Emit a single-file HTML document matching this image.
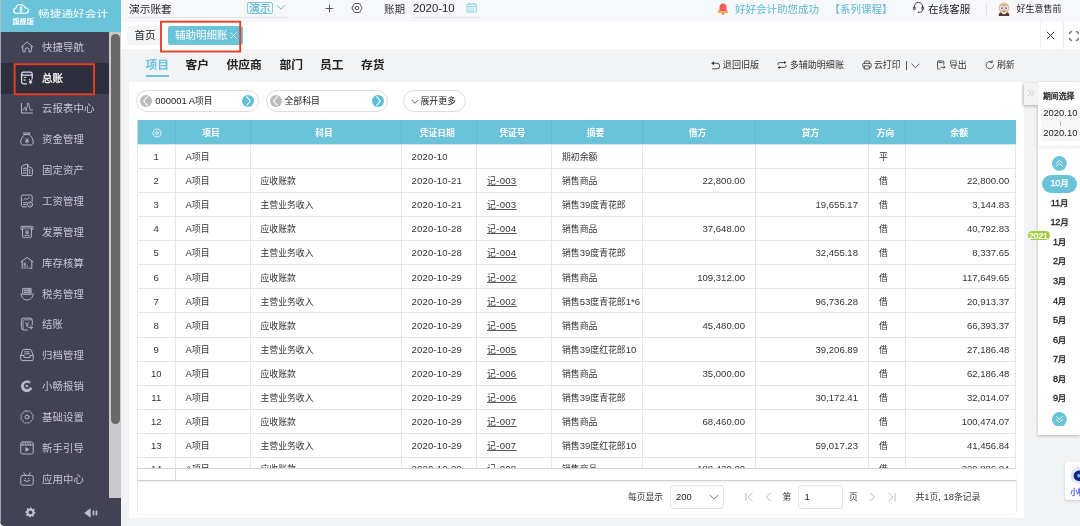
<!DOCTYPE html>
<html lang="zh-CN">
<head>
<meta charset="utf-8">
<title>辅助明细账</title>
<style>
html,body{margin:0;padding:0}
body{width:1080px;height:526px;overflow:hidden;position:relative;background:#f2f3f5;font-family:"Liberation Sans","Noto Sans CJK SC",sans-serif;color:#333;font-size:8.75px;line-height:1}
*{box-sizing:border-box}
#app{position:absolute;left:0;top:0;width:1080px;height:526px;overflow:hidden;will-change:transform;background:#f2f3f5}
.abs{position:absolute}
.l{font-size:1.08em;line-height:0}
.la{position:relative;top:-0.8px}
td .la{top:0}
.t{position:absolute;white-space:nowrap;line-height:12px;height:12px;margin-top:-6px}
#side{position:absolute;left:0;top:0;width:121px;height:526px;background:#434155;overflow:hidden;border-bottom-left-radius:5px}
#logo{position:absolute;left:0;top:0;width:121px;height:32px;background:#6ac3d9}
.nav{position:absolute;left:0;width:109px;height:31px;color:#c6c7d1;font-size:10.4px}
.nav.sel{background:#2e2e3d;color:#f0f0f3;font-weight:normal;-webkit-text-stroke:0.35px #f0f0f3}
.nav span{position:absolute;left:42px;top:50%;line-height:14px;margin-top:-6.8px;white-space:nowrap;letter-spacing:0.1px}
.nav svg{position:absolute;left:18.55px;top:50%;margin-top:-8.8px;width:16px;height:16px;overflow:visible;color:#b9bbca}
.nav.sel svg{color:#dcdde4}
#track{position:absolute;left:109px;top:32px;width:12px;height:466px;background:#c9c9ce}
#thumb{position:absolute;left:111.3px;top:34px;width:8.6px;height:390.3px;background:#696969;border-radius:4.3px}
#sfoot{position:absolute;left:0;top:498px;width:121px;height:28px;background:#434155}
#top{position:absolute;left:121px;top:0;width:959px;height:22px;background:#f7f8fc}
#tabs{position:absolute;left:121px;top:22px;width:959px;height:27px;background:#fff}
.red{position:absolute;border:2px solid #e63f24}
#panel{position:absolute;left:129px;top:82px;width:895px;height:436px;background:#fff}
.pill{position:absolute;top:89.5px;height:22.5px;border:1px solid #dedede;border-radius:11.5px;background:#fff}
.circ{position:absolute;width:12px;height:12px;border-radius:6px;top:4px}
table{border-collapse:collapse;table-layout:fixed;position:absolute;left:137px;top:120.25px;width:878px}
th{background:#6ac3d9;color:#fff;font-weight:bold;height:24px;padding:3px 3px 0 0;text-align:center;font-size:8.75px;border-left:1px solid #61b9d0;border-bottom:1px solid #cdeaf2}
th:first-child{border-left:1px solid #dcdcdc;padding:2px 0 0 1px}
td{height:24.1px;padding:2.4px 10px 0 10px;border:1px solid #e6e6e6;font-size:8.85px;color:#333;white-space:nowrap;overflow:hidden}
td.u{letter-spacing:0.3px}
td.n{letter-spacing:0.17px}
tr.last td{padding-top:0.6px}
td.c{text-align:center;padding:2.4px 0 0 0}
td.r{text-align:right}
td.u span{text-decoration:underline;text-decoration-thickness:0.7px;text-underline-offset:1.2px;text-decoration-color:#555}
#tblwrap{position:absolute;left:0;top:0;width:1080px;height:468px;overflow:hidden}
.mon{position:absolute;left:1038px;width:42px;text-align:center;font-weight:normal;-webkit-text-stroke:0.3px currentColor;font-size:8.5px;letter-spacing:-0.2px;line-height:12px;height:12px;margin-top:-6px;color:#333;padding-left:1px}
</style>
</head>
<body>
<div id="app">
<div id="side">
<div id="logo">
<svg class="abs" style="left:12px;top:3px" width="18" height="12" viewBox="0 0 18 12"><path d="M4.6 10.3 C2.7 10.3 1.6 9.2 1.6 7.7 C1.6 6.4 2.5 5.4 3.8 5.2 C4.1 3 5.9 1.5 8.4 1.5 C10.6 1.5 12.3 2.8 12.9 4.7 C14.8 4.7 16.4 5.8 16.4 7.6 C16.4 9.2 15.1 10.3 13.4 10.3 Z" fill="none" stroke="#fff" stroke-width="1.1"/><path d="M9 1.8 V10 M7.6 5 H10.4 M7.6 6.6 H10.4 M7.9 8.2 L9 9.3 L10.1 8.2" fill="none" stroke="#fff" stroke-width="0.9"/></svg>
<div class="t" style="left:12.5px;top:22.3px;font-size:7.1px;color:#fff;font-weight:bold;letter-spacing:0px">旗舰版</div>
<div class="t" style="left:37.5px;top:13.6px;font-size:8.6px;color:#fff;transform:scaleX(1.36);transform-origin:0 50%;letter-spacing:0px">畅捷通好会计</div>
</div>
<div class="nav" style="top:32.00px"><svg viewBox="-8 -8 16 16"><path d="M-5.7 0 L0.1 -5.1 L5.9 0 M-4.2 -0.9 V3.9 Q-4.2 5 -3.2 5 H-1.9 V2.4 Q-1.9 0.9 0.1 0.9 Q2.1 0.9 2.1 2.4 V5 H3.4 Q4.4 5 4.4 3.9 V-0.9" fill="none" stroke="currentColor" stroke-width="0.95" stroke-linecap="round" stroke-linejoin="round"/></svg><span>快捷导航</span></div>
<div class="nav sel" style="top:62.86px"><svg viewBox="-8 -8 16 16"><path d="M-0.5 5.9 H-3.6 Q-5.4 5.9 -5.4 4.1 V-4 Q-5.4 -5.8 -3.6 -5.8 H3.4 Q5.2 -5.8 5.2 -4 V0.3 M-5.4 -2.8 H5.2" fill="none" stroke="currentColor" stroke-width="1.3" stroke-linecap="round"/><path d="M-3.2 -0.6 H-0.6" fill="none" stroke="currentColor" stroke-width="0.9"/><rect x="-3.3" y="1.1" width="1.9" height="1.9" fill="currentColor" opacity="0.7"/><path d="M2.08 1.12 L3.60 3.02 L5.12 1.12 M3.60 3.02 V5.87 M2.08 3.59 H5.12 M2.08 4.73 H5.12" fill="none" stroke="currentColor" stroke-width="1"/></svg><span>总账</span></div>
<div class="nav" style="top:93.72px"><svg viewBox="-8 -8 16 16"><path d="M-5.5 -4.6 V5 H5.4" fill="none" stroke="currentColor" stroke-width="0.95" stroke-linecap="round" stroke-linejoin="round"/><path d="M-3.8 2.2 L-2.1 -0.8 L-0.8 2.9 L0.9 -5 L1.5 -5 L3.1 1.9 L5.6 2.1" fill="none" stroke="currentColor" stroke-width="0.8" stroke-linecap="round" stroke-linejoin="round"/></svg><span>云报表中心</span></div>
<div class="nav" style="top:124.58px"><svg viewBox="-8 -8 16 16"><path d="M-3.1 -6 H3.1 L2.4 -4.4 H-2.4 Z M-2.4 -4.4 C-4.6 -2.6 -6.2 0.2 -6.2 3 C-6.2 5 -5 6 -3.4 6 H3.4 C5 6 6.2 5 6.2 3 C6.2 0.2 4.6 -2.6 2.4 -4.4" fill="none" stroke="currentColor" stroke-width="0.95" stroke-linecap="round" stroke-linejoin="round"/><path d="M-1.44 -0.56 L0.00 1.24 L1.44 -0.56 M0.00 1.24 V3.94 M-1.44 1.78 H1.44 M-1.44 2.86 H1.44" fill="none" stroke="currentColor" stroke-width="0.8" stroke-linecap="round" stroke-linejoin="round"/></svg><span>资金管理</span></div>
<div class="nav" style="top:155.44px"><svg viewBox="-8 -8 16 16"><path d="M0.6 5.6 H-4 Q-5.4 5.6 -5.4 4.2 V-3.2 Q-5.4 -4 -4.6 -4.3 L0 -5.9 Q0.6 -6 0.8 -5.4 L1.3 -3.5 L4.6 -2 Q5.4 -1.6 5.4 -0.8 V4.2 Q5.4 5.6 4 5.6 H0.6 V-5.6" fill="none" stroke="currentColor" stroke-width="0.95" stroke-linecap="round" stroke-linejoin="round"/><path d="M-3.6 -1.7 H-2.4 M-1.8 -1.7 H-0.6 M-3.6 0.3 H-2.4 M-1.8 0.3 H-0.6 M-3.1 2.4 V3.6 M-1.3 2.4 V3.6 M2.8 -0.6 V3.6" fill="none" stroke="currentColor" stroke-width="0.95" stroke-linecap="round" stroke-linejoin="round"/></svg><span>固定资产</span></div>
<div class="nav" style="top:186.30px"><svg viewBox="-8 -8 16 16"><path d="M-0.6 5.9 H-4 Q-5.6 5.9 -5.6 4.3 V-4.4 Q-5.6 -6 -4 -6 H3.6 Q5.2 -6 5.2 -4.4 V0.5 M-3.3 -0.9 L-1.7 -2.7 L-0.1 -1.5 L2.5 -3.7 M-3.4 1.7 H-0.3 M-3.4 3.5 H-0.9" fill="none" stroke="currentColor" stroke-width="0.95" stroke-linecap="round" stroke-linejoin="round"/><circle cx="3" cy="3.5" r="2.6" fill="none" stroke="currentColor" stroke-width="0.95" stroke-linecap="round" stroke-linejoin="round"/><path d="M2.4 2.5 L3.6 4.3" fill="none" stroke="currentColor" stroke-width="0.8" stroke-linecap="round" stroke-linejoin="round"/></svg><span>工资管理</span></div>
<div class="nav" style="top:217.16px"><svg viewBox="-8 -8 16 16"><path d="M-4.4 -2.4 H-5 Q-6.2 -2.4 -6.2 -3.6 V-4.5 Q-6.2 -5.7 -5 -5.7 H5 Q6.2 -5.7 6.2 -4.5 V-3.6 Q6.2 -2.4 5 -2.4 H4.4 M-4.4 -4 H4.4 M-4.4 -4 V5 L-3 5.9 L-1.5 5 L0 5.9 L1.5 5 L3 5.9 L4.4 5 V-4" fill="none" stroke="currentColor" stroke-width="0.95" stroke-linecap="round" stroke-linejoin="round"/><path d="M-1.36 -2.14 L0.00 -0.44 L1.36 -2.14 M0.00 -0.44 V2.11 M-1.36 0.07 H1.36 M-1.36 1.09 H1.36 M-2.4 3.4 H2.4" fill="none" stroke="currentColor" stroke-width="0.8" stroke-linecap="round" stroke-linejoin="round"/></svg><span>发票管理</span></div>
<div class="nav" style="top:248.02px"><svg viewBox="-8 -8 16 16"><path d="M-6 -1.2 L0 -5.5 L6 -1.2 M-4.8 -1.6 V5.5 M4.8 -1.6 V5.5 H3.6" fill="none" stroke="currentColor" stroke-width="0.95" stroke-linecap="round" stroke-linejoin="round"/><path d="M-3 0.2 H-1.6 M-3 1.4 H-1.6 M-3 3 H-1.6 M-3 5 H-1.6 M-0.2 3 H0.6 M-0.2 5 H0.6 M2 5 H2.8" fill="none" stroke="currentColor" stroke-width="0.95" stroke-linecap="round" stroke-linejoin="round" stroke-width="1.3" stroke-linecap="butt"/></svg><span>库存核算</span></div>
<div class="nav" style="top:278.88px"><svg viewBox="-8 -8 16 16"><path d="M-5.9 -0.4 C-5.9 3.4 -3.3 6 0.1 6 C3.5 6 6.1 3.4 6.1 -0.4" fill="none" stroke="currentColor" stroke-width="0.95" stroke-linecap="round" stroke-linejoin="round"/><path d="M-4 -5.6 H4.2 V0.4 H-4 Z M-2.6 -3.8 H-0.4 M-2.6 -1.6 H-0.4 M1 -4 V-1.2 H2.8 V-4 Z" fill="none" stroke="currentColor" stroke-width="0.9" stroke-linecap="round" stroke-linejoin="round"/><path d="M-3.6 -5.2 H3.8 V0 H-3.6 Z" fill="currentColor" opacity="0.35"/></svg><span>税务管理</span></div>
<div class="nav" style="top:309.74px"><svg viewBox="-8 -8 16 16"><path d="M0.4 6 H-3 Q-5.6 6 -5.6 3.4 V-3.6 Q-5.6 -5.9 -3.3 -5.9 H3 Q5.3 -5.9 5.3 -3.6 V1" fill="none" stroke="currentColor" stroke-width="0.95" stroke-linecap="round" stroke-linejoin="round"/><path d="M-4 5.2 V-2.6 Q-4 -4.2 -2.4 -4.2 H4.4" fill="none" stroke="currentColor" stroke-width="0.8" stroke-linecap="round" stroke-linejoin="round"/><path d="M-1.2 -1.6 L0.2 0.6 L1.6 -1.6 M0.2 0.6 V3 M-1 1.2 H1.4" fill="none" stroke="currentColor" stroke-width="0.8" stroke-linecap="round" stroke-linejoin="round"/><path d="M1.8 3.6 H5 M3.8 2.2 L5.6 3.6 L3.8 5" fill="none" stroke="currentColor" stroke-width="0.95" stroke-linecap="round" stroke-linejoin="round"/></svg><span>结账</span></div>
<div class="nav" style="top:340.60px"><svg viewBox="-8 -8 16 16"><path d="M-6.2 0.4 L-4.4 -4.6 Q-4 -5.6 -3 -5.6 H3 Q4 -5.6 4.4 -4.6 L6.2 0.4 M-6.2 0.4 H-3 V2.6 H3 V0.4 H6.2 V4.2 Q6.2 5.6 4.8 5.6 H-4.8 Q-6.2 5.6 -6.2 4.2 Z" fill="none" stroke="currentColor" stroke-width="0.95" stroke-linecap="round" stroke-linejoin="round"/><path d="M-2.3 -3.2 H2.3 M-2.3 -1.2 H2.3" fill="none" stroke="currentColor" stroke-width="0.95" stroke-linecap="round" stroke-linejoin="round" stroke-width="1.1"/></svg><span>归档管理</span></div>
<div class="nav" style="top:371.46px"><svg viewBox="-8 -8 16 16"><path d="M4 -3.9 A5.9 5.9 0 1 0 5.4 2.2 L2.9 0.9 A3.1 3.1 0 1 1 2 -2.4 Z" fill="currentColor"/><circle cx="-0.2" cy="0" r="1.25" fill="currentColor"/></svg><span>小畅报销</span></div>
<div class="nav" style="top:402.32px"><svg viewBox="-8 -8 16 16"><path d="M-1.2 -6 Q0 -5.2 1.2 -6 Q2.6 -6.4 3.6 -5 Q3.9 -3.6 5.2 -3.2 Q6.4 -2.2 6 -0.9 Q5.2 0 6 0.9 Q6.4 2.2 5.2 3.2 Q3.9 3.6 3.6 5 Q2.6 6.4 1.2 6 Q0 5.2 -1.2 6 Q-2.6 6.4 -3.6 5 Q-3.9 3.6 -5.2 3.2 Q-6.4 2.2 -6 0.9 Q-5.2 0 -6 -0.9 Q-6.4 -2.2 -5.2 -3.2 Q-3.9 -3.6 -3.6 -5 Q-2.6 -6.4 -1.2 -6 Z" fill="none" stroke="currentColor" stroke-width="0.8" stroke-linecap="round" stroke-linejoin="round"/><circle cx="0" cy="0" r="2" fill="none" stroke="currentColor" stroke-width="0.95" stroke-linecap="round" stroke-linejoin="round"/></svg><span>基础设置</span></div>
<div class="nav" style="top:433.18px"><svg viewBox="-8 -8 16 16"><path d="M-6.2 -4.4 Q-6.2 -6 -4.6 -6 H4.6 Q6.2 -6 6.2 -4.4 V4.4 Q6.2 6 4.6 6 H-4.6 Q-6.2 6 -6.2 4.4 Z M-6.2 -3 H6.2" fill="none" stroke="currentColor" stroke-width="0.95" stroke-linecap="round" stroke-linejoin="round"/><path d="M-4.4 -6 L-3.6 -3 M-2 -6 L-1.2 -3 M0.4 -6 L1.2 -3 M2.8 -6 L3.6 -3" fill="none" stroke="currentColor" stroke-width="0.8" stroke-linecap="round" stroke-linejoin="round"/><path d="M-1.3 -0.6 L2 1.5 L-1.3 3.6 Z" fill="currentColor" stroke="currentColor" stroke-width="0.5" stroke-linejoin="round"/></svg><span>新手引导</span></div>
<div class="nav" style="top:464.04px"><svg viewBox="-8 -8 16 16"><path d="M-4.4 -3.6 H4.4 Q6.2 -3.6 6.2 -1.8 V4.4 Q6.2 6.2 4.4 6.2 H-4.4 Q-6.2 6.2 -6.2 4.4 V-1.8 Q-6.2 -3.6 -4.4 -3.6 Z M-3.2 -6.2 L-1.6 -3.8 M3.2 -6.2 L1.6 -3.8" fill="none" stroke="currentColor" stroke-width="0.95" stroke-linecap="round" stroke-linejoin="round"/><path d="M-2.8 1.4 Q0 3.8 2.8 1.4" fill="none" stroke="currentColor" stroke-width="0.95" stroke-linecap="round" stroke-linejoin="round"/><circle cx="-1.7" cy="-0.4" r="0.7" fill="currentColor"/><circle cx="1.7" cy="-0.4" r="0.7" fill="currentColor"/></svg><span>应用中心</span></div>
<div id="track"></div><div id="thumb"></div>
<div id="sfoot">
<svg class="abs" style="left:25.3px;top:9.2px" width="10.8" height="10.8" viewBox="0 0 12 12"><path d="M6 0.3 L7.2 0.5 L7.6 1.9 L8.6 2.4 L9.9 1.8 L10.9 3 L10.1 4.2 L10.4 5.3 L11.7 5.9 L11.5 7.3 L10.1 7.6 L9.6 8.6 L10.2 9.9 L9 10.9 L7.8 10.1 L6.7 10.4 L6.1 11.7 L4.7 11.5 L4.4 10.1 L3.4 9.6 L2.1 10.2 L1.1 9 L1.9 7.8 L1.6 6.7 L0.3 6.1 L0.5 4.7 L1.9 4.4 L2.4 3.4 L1.8 2.1 L3 1.1 L4.2 1.9 L5.3 1.6 Z" fill="#bcc2ce"/><circle cx="6" cy="6" r="2.1" fill="#434155"/></svg>
<svg class="abs" style="left:84.3px;top:9.5px" width="14" height="10" viewBox="0 0 14 10"><path d="M0.2 5 L6.6 0.3 V9.7 Z" fill="#bcc2ce"/><rect x="8.6" y="2.6" width="1.7" height="4.8" fill="#bcc2ce"/><rect x="11.6" y="2.6" width="1.7" height="4.8" fill="#bcc2ce"/></svg>
</div>
<div class="abs" style="left:0;top:0;width:1px;height:526px;background:rgba(190,196,196,0.75)"></div>
</div>
<svg class="abs" style="left:0;top:0" width="130" height="110" viewBox="0 0 130 110"><rect x="14.65" y="64.2" width="79.4" height="30.1" fill="none" stroke="#e63f24" stroke-width="1.9"/></svg>
<div id="top">
<div class="t" style="left:8px;top:8.9px;font-size:10.7px;color:#1f1f1f;">演示账套</div>
<div class="abs" style="left:8px;top:16.5px;width:160px;height:1px;background:#e3e5ea"></div>
<div class="abs" style="left:126px;top:2px;width:26px;height:12px;border:1px solid #7accdf;border-radius:2px"></div>
<div class="t" style="left:128.3px;top:8.0px;font-size:10.6px;color:#58b8d1;-webkit-text-stroke:0.2px #58b8d1">演示</div>
<svg class="abs" style="left:155px;top:4.2px" width="10" height="7" viewBox="0 0 10 7"><path d="M0.8 1 L5 5.2 L9.2 1" fill="none" stroke="#6ac3d9" stroke-width="1"/></svg>
<svg class="abs" style="left:204.3px;top:3.9px" width="9" height="9" viewBox="0 0 9 9"><path d="M4.5 0.6 V8.4 M0.6 4.5 H8.4" fill="none" stroke="#333" stroke-width="0.8"/></svg>
<svg class="abs" style="left:229.9px;top:2.3px" width="12" height="12" viewBox="-6 -6 12 12"><path d="M-5.1 0 L-2.9 -4 Q-2.6 -4.5 -2 -4.5 H2 Q2.6 -4.5 2.9 -4 L5.1 0 L2.9 4 Q2.6 4.5 2 4.5 H-2 Q-2.6 4.5 -2.9 4 Z" fill="none" stroke="#333" stroke-width="0.8" stroke-linejoin="round"/><circle cx="0" cy="0" r="1.7" fill="none" stroke="#333" stroke-width="0.8"/></svg>
<div class="t" style="left:263px;top:8.6px;font-size:10.6px;color:#333;">账期</div>
<div class="t" style="left:292px;top:8.9px;font-size:10.5px;color:#1f1f1f;"><span class="l la">2020-10</span></div>
<div class="abs" style="left:292px;top:16.5px;width:68px;height:1px;background:#e3e5ea"></div>
<svg class="abs" style="left:344.6px;top:2.3px" width="11.3" height="10.8" viewBox="0 0 12 11"><path d="M1 2 H11 V10.4 H1 Z M1 4.6 H11 M3.6 0.5 V3 M8.4 0.5 V3" fill="none" stroke="#7accdf" stroke-width="0.9"/><path d="M2.6 6.2 H9.4 M2.6 7.6 H9.4 M2.6 9 H9.4" fill="none" stroke="#7accdf" stroke-width="0.8" stroke-dasharray="1.3 0.9"/></svg>
<svg class="abs" style="left:596.2px;top:3px" width="12" height="13" viewBox="0 0 12 13"><path d="M6 0.6 C3.6 0.6 2.5 2.6 2.5 4.6 V6.8 L0.9 8.6 H11.1 L9.5 6.8 V4.6 C9.5 2.6 8.4 0.6 6 0.6 Z" fill="#f0604f"/><path d="M0.9 8.6 H11.1 V10.2 H0.9 Z" fill="#fbb23e"/><path d="M4.6 10.2 H7.4 Q7.4 11.8 6 11.8 Q4.6 11.8 4.6 10.2 Z" fill="#f0604f"/></svg>
<div class="t" style="left:614px;top:9.2px;font-size:10.5px;color:#5bb9d3;">好好会计助您成功</div>
<div class="t" style="left:708.5px;top:9.2px;font-size:10.5px;color:#5bb9d3;">【系列课程】</div>
<svg class="abs" style="left:791.3px;top:0.6px" width="13" height="13" viewBox="0 0 13 13"><path d="M2.5 7.5 V5.5 C2.5 3 4.2 1.3 6.5 1.3 C8.8 1.3 10.5 3 10.5 5.5 V7.5 M10.5 8.5 C10.5 10.3 9.5 11.2 7.3 11.3" fill="none" stroke="#333" stroke-width="0.9"/><rect x="1.4" y="5.6" width="1.8" height="3.2" rx="0.8" fill="none" stroke="#333" stroke-width="0.8"/><rect x="9.8" y="5.6" width="1.8" height="3.2" rx="0.8" fill="none" stroke="#333" stroke-width="0.8"/><circle cx="6.6" cy="11.3" r="0.8" fill="#333"/></svg>
<div class="t" style="left:807px;top:8.8px;font-size:10.6px;color:#222;">在线客服</div>
<div class="abs" style="left:865px;top:3px;width:1px;height:12px;background:#e0e0e4"></div>
<svg class="abs" style="left:876px;top:1.6px" width="14" height="14" viewBox="0 0 14 14"><path d="M1.6 14 C1.6 11 3.5 9.6 7 9.6 C10.5 9.6 12.4 11 12.4 14 Z" fill="#5a3a2c"/><ellipse cx="7" cy="6" rx="5.6" ry="5.4" fill="#e6c5a6"/><path d="M1.6 4.6 Q7 -1.6 12.4 4.6 Q7 2.2 1.6 4.6 Z" fill="#d9b697"/><circle cx="4.6" cy="6" r="1.7" fill="#fff"/><circle cx="9.4" cy="6" r="1.7" fill="#fff"/><circle cx="4.8" cy="6.1" r="0.9" fill="#2f4a78"/><circle cx="9.2" cy="6.1" r="0.9" fill="#2f4a78"/><path d="M4.6 9.6 Q7 12 9.4 9.6 L9 11.6 Q7 13 5 11.6 Z" fill="#f4efe8"/><path d="M5.6 9.2 H8.4" stroke="#8a5a44" stroke-width="0.7" fill="none"/></svg>
<div class="t" style="left:895.5px;top:8.9px;font-size:9px;color:#222;">好生意售前</div>
</div>
<div id="tabs">
<div class="abs" style="left:40px;top:0;width:80px;height:29.5px;background:#fff"></div>
<div class="abs" style="left:6px;top:4px;width:35px;height:19px;background:#f4f5f7;border-radius:2px"></div>
<div class="t" style="left:13.5px;top:13.3px;font-size:10.5px;color:#222;">首页</div>
<div class="abs" style="left:47px;top:4px;width:75px;height:19px;background:#6ac3d9;border-radius:2.5px"></div>
<div class="t" style="left:54px;top:13.3px;font-size:10.5px;color:#fff;">辅助明细账</div>
<svg class="abs" style="left:109.2px;top:10.1px" width="7" height="7" viewBox="0 0 7 7"><path d="M0.5 0.5 L6.5 6.5 M6.5 0.5 L0.5 6.5" fill="none" stroke="#fff" stroke-width="0.8"/></svg>
<svg class="abs" style="left:925px;top:9px" width="9" height="9" viewBox="0 0 9 9"><path d="M0.8 0.8 L8.2 8.2 M8.2 0.8 L0.8 8.2" fill="none" stroke="#333" stroke-width="1"/></svg>
<div class="abs" style="left:941.5px;top:0;width:1px;height:27px;background:#ececec"></div>
<div class="abs" style="left:918.5px;top:0;width:1px;height:27px;background:#f0f0f0"></div>
<svg class="abs" style="left:948px;top:8.5px" width="10" height="10" viewBox="0 0 10 10"><path d="M0.8 3.2 V1.6 Q0.8 0.8 1.6 0.8 H3.2 M6.8 0.8 H8.4 Q9.2 0.8 9.2 1.6 V3.2 M9.2 6.8 V8.4 Q9.2 9.2 8.4 9.2 H6.8 M3.2 9.2 H1.6 Q0.8 9.2 0.8 8.4 V6.8" fill="none" stroke="#333" stroke-width="1"/></svg>
</div>
<svg class="abs" style="left:150px;top:10px" width="110" height="50" viewBox="150 10 110 50"><rect x="161" y="21.7" width="79.2" height="29.8" fill="none" stroke="#e63f24" stroke-width="1.9"/></svg>
<div class="t" style="left:145.5px;top:64.8px;font-size:11.8px;color:#6ac3d9;font-weight:bold;line-height:16px;height:16px;margin-top:-8px;">项目</div>
<div class="t" style="left:185.5px;top:64.8px;font-size:11.8px;color:#222;font-weight:bold;line-height:16px;height:16px;margin-top:-8px;">客户</div>
<div class="t" style="left:226.5px;top:64.8px;font-size:11.8px;color:#222;font-weight:bold;line-height:16px;height:16px;margin-top:-8px;">供应商</div>
<div class="t" style="left:279.5px;top:64.8px;font-size:11.8px;color:#222;font-weight:bold;line-height:16px;height:16px;margin-top:-8px;">部门</div>
<div class="t" style="left:320px;top:64.8px;font-size:11.8px;color:#222;font-weight:bold;line-height:16px;height:16px;margin-top:-8px;">员工</div>
<div class="t" style="left:361px;top:64.8px;font-size:11.8px;color:#222;font-weight:bold;line-height:16px;height:16px;margin-top:-8px;">存货</div>
<div class="abs" style="left:145.5px;top:75px;width:23.5px;height:2px;background:#6ac3d9"></div>
<svg class="abs" style="left:711px;top:61.4px" width="9.4" height="8.6" viewBox="0 0 9.4 8.6"><path d="M2.4 2.2 H5.8 Q8.8 2.2 8.8 5 Q8.8 7.8 5.8 7.8 H1.6" fill="none" stroke="#333" stroke-width="0.9" stroke-linecap="round"/><path d="M0.2 2.2 L3 0.2 V4.2 Z" fill="#333"/></svg>
<div class="t" style="left:722.8px;top:65.3px;font-size:9.1px;color:#333;">退回旧版</div>
<svg class="abs" style="left:776.6px;top:61.3px" width="10" height="8" viewBox="0 0 10 8"><path d="M1 3.6 V3 Q1 1.6 2.4 1.6 H8.6 M9 4.4 V5 Q9 6.4 7.6 6.4 H1.4" fill="none" stroke="#333" stroke-width="0.85" stroke-linecap="round"/><path d="M7.2 0.1 L9.4 1.6 L7.2 3.1 Z M2.8 4.9 L0.6 6.4 L2.8 7.9 Z" fill="#333"/></svg>
<div class="t" style="left:789.7px;top:65.3px;font-size:9.05px;color:#333;">多辅助明细账</div>
<svg class="abs" style="left:862px;top:60px" width="10" height="10" viewBox="0 0 10 10"><path d="M2.6 3.4 V1.8 Q2.6 1 3.4 1 H6.6 Q7.4 1 7.4 1.8 V3.4 M2.6 7.4 H1.6 Q0.8 7.4 0.8 6.6 V4.2 Q0.8 3.4 1.6 3.4 H8.4 Q9.2 3.4 9.2 4.2 V6.6 Q9.2 7.4 8.4 7.4 H7.4 M2.6 5.8 H7.4 V9 H2.6 Z" fill="none" stroke="#333" stroke-width="0.8" stroke-linecap="round" stroke-linejoin="round"/></svg>
<div class="t" style="left:874px;top:65.3px;font-size:8.9px;color:#333;">云打印</div>
<div class="abs" style="left:905.5px;top:61px;width:0.8px;height:9px;background:#555"></div>
<svg class="abs" style="left:910.5px;top:62.5px" width="9" height="6" viewBox="0 0 9 6"><path d="M0.8 1 L4.5 4.7 L8.2 1" fill="none" stroke="#333" stroke-width="0.8" stroke-linecap="round" stroke-linejoin="round"/></svg>
<svg class="abs" style="left:936px;top:60px" width="10" height="10" viewBox="0 0 10 10"><path d="M4 9 H2.3 Q1.5 9 1.5 8.2 V1.8 Q1.5 1 2.3 1 H7 Q7.8 1 7.8 1.8 V4.5 M3 1 V2.6 H6.2 M5 7.3 H9 M7.6 5.9 L9 7.3 L7.6 8.7" fill="none" stroke="#333" stroke-width="0.8" stroke-linecap="round" stroke-linejoin="round"/></svg>
<div class="t" style="left:949px;top:65.3px;font-size:8.9px;color:#333;">导出</div>
<svg class="abs" style="left:985px;top:60px" width="10" height="10" viewBox="0 0 10 10"><path d="M8.6 5 A3.7 3.7 0 1 1 7 2 M7.2 0.6 V2.4 H5.4" fill="none" stroke="#333" stroke-width="0.8" stroke-linecap="round" stroke-linejoin="round"/></svg>
<div class="t" style="left:997px;top:65.3px;font-size:8.9px;color:#333;">刷新</div>
<div id="panel"></div>
<div class="pill" style="left:136px;width:122.5px"></div>
<svg class="abs" style="left:140px;top:94.9px" width="12" height="12" viewBox="0 0 12 12"><circle cx="6" cy="6" r="6" fill="#bcbcbc"/><path d="M7.6 1.4 L3.7 6 L7.6 10.6" fill="none" stroke="#fff" stroke-width="1.1"/></svg>
<svg class="abs" style="left:242.4px;top:94.9px" width="12" height="12" viewBox="0 0 12 12"><circle cx="6" cy="6" r="6" fill="#5fbed7"/><path d="M4.4 1.4 L8.3 6 L4.4 10.6" fill="none" stroke="#fff" stroke-width="1.1"/></svg>
<div class="t" style="left:155.2px;top:101.1px;font-size:8.75px;color:#222;"><span class="l">000001 A</span>项目</div>
<div class="pill" style="left:265.5px;width:122.5px"></div>
<svg class="abs" style="left:269.5px;top:94.9px" width="12" height="12" viewBox="0 0 12 12"><circle cx="6" cy="6" r="6" fill="#bcbcbc"/><path d="M7.6 1.4 L3.7 6 L7.6 10.6" fill="none" stroke="#fff" stroke-width="1.1"/></svg>
<svg class="abs" style="left:371.9px;top:94.9px" width="12" height="12" viewBox="0 0 12 12"><circle cx="6" cy="6" r="6" fill="#5fbed7"/><path d="M4.4 1.4 L8.3 6 L4.4 10.6" fill="none" stroke="#fff" stroke-width="1.1"/></svg>
<div class="t" style="left:284.5px;top:101.1px;font-size:8.9px;color:#222;">全部科目</div>
<div class="pill" style="left:403px;width:63px"></div>
<svg class="abs" style="left:411px;top:98.5px" width="8" height="6" viewBox="0 0 8 6"><path d="M0.8 1 L4 4.3 L7.2 1" fill="none" stroke="#333" stroke-width="0.8"/></svg>
<div class="t" style="left:420.5px;top:101px;font-size:8.9px;color:#222;">展开更多</div>
<div id="tblwrap"><table><colgroup><col style="width:37.5px"><col style="width:75px"><col style="width:151px"><col style="width:75.5px"><col style="width:75px"><col style="width:91px"><col style="width:113px"><col style="width:113px"><col style="width:37px"><col style="width:110px"></colgroup>
<thead><tr>
<th><svg width="10" height="10" viewBox="-5 -5 10 10" style="display:block;margin:0 auto"><path d="M-4.3 0 L-2.5 -3.3 Q-2.2 -3.8 -1.6 -3.8 H1.6 Q2.2 -3.8 2.5 -3.3 L4.3 0 L2.5 3.3 Q2.2 3.8 1.6 3.8 H-1.6 Q-2.2 3.8 -2.5 3.3 Z" fill="none" stroke="#fff" stroke-width="0.8" stroke-linejoin="round"/><circle cx="0" cy="0" r="1.4" fill="none" stroke="#fff" stroke-width="0.8"/></svg></th>
<th>项目</th>
<th>科目</th>
<th>凭证日期</th>
<th>凭证号</th>
<th>摘要</th>
<th>借方</th>
<th>贷方</th>
<th>方向</th>
<th>余额</th>
</tr></thead><tbody>
<tr>
<td class="c"><span class="l la">1</span></td>
<td><span class="l">A</span>项目</td>
<td></td>
<td class="n"><span class="l la">2020-10</span></td>
<td class="u"></td>
<td>期初余额</td>
<td class="r"></td>
<td class="r"></td>
<td>平</td>
<td class="r" style="padding-right:5.6px"></td>
</tr>
<tr>
<td class="c"><span class="l la">2</span></td>
<td><span class="l">A</span>项目</td>
<td>应收账款</td>
<td class="n"><span class="l la">2020-10-21</span></td>
<td class="u"><span>记<span class="l">-003</span></span></td>
<td>销售商品</td>
<td class="r"><span class="l la">22,800.00</span></td>
<td class="r"></td>
<td>借</td>
<td class="r" style="padding-right:5.6px"><span class="l la">22,800.00</span></td>
</tr>
<tr>
<td class="c"><span class="l la">3</span></td>
<td><span class="l">A</span>项目</td>
<td>主营业务收入</td>
<td class="n"><span class="l la">2020-10-21</span></td>
<td class="u"><span>记<span class="l">-003</span></span></td>
<td>销售<span class="l">39</span>度青花郎</td>
<td class="r"></td>
<td class="r"><span class="l la">19,655.17</span></td>
<td>借</td>
<td class="r" style="padding-right:5.6px"><span class="l la">3,144.83</span></td>
</tr>
<tr>
<td class="c"><span class="l la">4</span></td>
<td><span class="l">A</span>项目</td>
<td>应收账款</td>
<td class="n"><span class="l la">2020-10-28</span></td>
<td class="u"><span>记<span class="l">-004</span></span></td>
<td>销售商品</td>
<td class="r"><span class="l la">37,648.00</span></td>
<td class="r"></td>
<td>借</td>
<td class="r" style="padding-right:5.6px"><span class="l la">40,792.83</span></td>
</tr>
<tr>
<td class="c"><span class="l la">5</span></td>
<td><span class="l">A</span>项目</td>
<td>主营业务收入</td>
<td class="n"><span class="l la">2020-10-28</span></td>
<td class="u"><span>记<span class="l">-004</span></span></td>
<td>销售<span class="l">39</span>度青花郎</td>
<td class="r"></td>
<td class="r"><span class="l la">32,455.18</span></td>
<td>借</td>
<td class="r" style="padding-right:5.6px"><span class="l la">8,337.65</span></td>
</tr>
<tr>
<td class="c"><span class="l la">6</span></td>
<td><span class="l">A</span>项目</td>
<td>应收账款</td>
<td class="n"><span class="l la">2020-10-29</span></td>
<td class="u"><span>记<span class="l">-002</span></span></td>
<td>销售商品</td>
<td class="r"><span class="l la">109,312.00</span></td>
<td class="r"></td>
<td>借</td>
<td class="r" style="padding-right:5.6px"><span class="l la">117,649.65</span></td>
</tr>
<tr>
<td class="c"><span class="l la">7</span></td>
<td><span class="l">A</span>项目</td>
<td>主营业务收入</td>
<td class="n"><span class="l la">2020-10-29</span></td>
<td class="u"><span>记<span class="l">-002</span></span></td>
<td>销售<span class="l">53</span>度青花郎<span class="l">1*6</span></td>
<td class="r"></td>
<td class="r"><span class="l la">96,736.28</span></td>
<td>借</td>
<td class="r" style="padding-right:5.6px"><span class="l la">20,913.37</span></td>
</tr>
<tr>
<td class="c"><span class="l la">8</span></td>
<td><span class="l">A</span>项目</td>
<td>应收账款</td>
<td class="n"><span class="l la">2020-10-29</span></td>
<td class="u"><span>记<span class="l">-005</span></span></td>
<td>销售商品</td>
<td class="r"><span class="l la">45,480.00</span></td>
<td class="r"></td>
<td>借</td>
<td class="r" style="padding-right:5.6px"><span class="l la">66,393.37</span></td>
</tr>
<tr>
<td class="c"><span class="l la">9</span></td>
<td><span class="l">A</span>项目</td>
<td>主营业务收入</td>
<td class="n"><span class="l la">2020-10-29</span></td>
<td class="u"><span>记<span class="l">-005</span></span></td>
<td>销售<span class="l">39</span>度红花郎<span class="l">10</span></td>
<td class="r"></td>
<td class="r"><span class="l la">39,206.89</span></td>
<td>借</td>
<td class="r" style="padding-right:5.6px"><span class="l la">27,186.48</span></td>
</tr>
<tr>
<td class="c"><span class="l la">10</span></td>
<td><span class="l">A</span>项目</td>
<td>应收账款</td>
<td class="n"><span class="l la">2020-10-29</span></td>
<td class="u"><span>记<span class="l">-006</span></span></td>
<td>销售商品</td>
<td class="r"><span class="l la">35,000.00</span></td>
<td class="r"></td>
<td>借</td>
<td class="r" style="padding-right:5.6px"><span class="l la">62,186.48</span></td>
</tr>
<tr>
<td class="c"><span class="l la">11</span></td>
<td><span class="l">A</span>项目</td>
<td>主营业务收入</td>
<td class="n"><span class="l la">2020-10-29</span></td>
<td class="u"><span>记<span class="l">-006</span></span></td>
<td>销售<span class="l">39</span>度青花郎</td>
<td class="r"></td>
<td class="r"><span class="l la">30,172.41</span></td>
<td>借</td>
<td class="r" style="padding-right:5.6px"><span class="l la">32,014.07</span></td>
</tr>
<tr>
<td class="c"><span class="l la">12</span></td>
<td><span class="l">A</span>项目</td>
<td>应收账款</td>
<td class="n"><span class="l la">2020-10-29</span></td>
<td class="u"><span>记<span class="l">-007</span></span></td>
<td>销售商品</td>
<td class="r"><span class="l la">68,460.00</span></td>
<td class="r"></td>
<td>借</td>
<td class="r" style="padding-right:5.6px"><span class="l la">100,474.07</span></td>
</tr>
<tr>
<td class="c"><span class="l la">13</span></td>
<td><span class="l">A</span>项目</td>
<td>主营业务收入</td>
<td class="n"><span class="l la">2020-10-29</span></td>
<td class="u"><span>记<span class="l">-007</span></span></td>
<td>销售<span class="l">39</span>度红花郎<span class="l">10</span></td>
<td class="r"></td>
<td class="r"><span class="l la">59,017.23</span></td>
<td>借</td>
<td class="r" style="padding-right:5.6px"><span class="l la">41,456.84</span></td>
</tr>
<tr class="last">
<td class="c"><span class="l la">14</span></td>
<td><span class="l">A</span>项目</td>
<td>应收账款</td>
<td class="n"><span class="l la">2020-10-29</span></td>
<td class="u"><span>记<span class="l">-008</span></span></td>
<td>销售商品</td>
<td class="r"><span class="l la">188,430.00</span></td>
<td class="r"></td>
<td>借</td>
<td class="r" style="padding-right:5.6px"><span class="l la">229,886.84</span></td>
</tr>
</tbody></table></div>
<div class="abs" style="left:137px;top:468px;width:879px;height:12.5px;background:#fff;border-top:1px solid #d4d4d4;border-bottom:1px solid #cfcfcf;border-left:1px solid #e6e6e6;box-shadow:0 1px 2px rgba(0,0,0,0.08)"></div>
<div class="abs" style="left:175px;top:469px;width:1px;height:11px;background:#dcdcdc"></div>
<div class="abs" style="left:137px;top:480px;width:879.5px;height:31px;border-left:1px solid #e3e3e3;border-right:1px solid #e9e9e9"></div>
<div class="abs" style="left:137px;top:514px;width:878px;height:1px;background:#f1f1f1"></div>
<div class="t" style="left:628px;top:497px;font-size:8.75px;color:#333;">每页显示</div>
<div class="abs" style="left:669.5px;top:485px;width:54.5px;height:24px;border:1px solid #e2e2e2;border-radius:3px;background:#fff"></div>
<div class="t" style="left:676px;top:497.3px;font-size:8.75px;color:#222;"><span class="l la">200</span></div>
<svg class="abs" style="left:708.5px;top:493.5px" width="10" height="7" viewBox="0 0 10 7"><path d="M0.8 1 L5 5.2 L9.2 1" fill="none" stroke="#555" stroke-width="0.8"/></svg>
<svg class="abs" style="left:745px;top:492px" width="9" height="10" viewBox="0 0 9 10"><path d="M1 0.8 V9.2 M7.6 0.8 L3 5 L7.6 9.2" fill="none" stroke="#b5b5b5" stroke-width="0.9"/></svg>
<svg class="abs" style="left:765px;top:492px" width="7" height="10" viewBox="0 0 7 10"><path d="M6 0.8 L1.4 5 L6 9.2" fill="none" stroke="#b5b5b5" stroke-width="0.9"/></svg>
<div class="t" style="left:782.5px;top:497px;font-size:8.75px;color:#333;">第</div>
<div class="abs" style="left:797.5px;top:485px;width:45.5px;height:24px;border:1px solid #e2e2e2;border-radius:3px;background:#fff"></div>
<div class="t" style="left:804.5px;top:497.3px;font-size:8.75px;color:#222;"><span class="l la">1</span></div>
<div class="t" style="left:849px;top:497px;font-size:8.75px;color:#333;">页</div>
<svg class="abs" style="left:869px;top:492px" width="7" height="10" viewBox="0 0 7 10"><path d="M1 0.8 L5.6 5 L1 9.2" fill="none" stroke="#b5b5b5" stroke-width="0.9"/></svg>
<svg class="abs" style="left:887px;top:492px" width="9" height="10" viewBox="0 0 9 10"><path d="M8 0.8 V9.2 M1.4 0.8 L6 5 L1.4 9.2" fill="none" stroke="#b5b5b5" stroke-width="0.9"/></svg>
<div class="t" style="left:915.5px;top:497px;font-size:8.75px;color:#333;">共<span class="l">1</span>页<span class="l">, 18</span>条记录</div>
<div class="abs" style="left:1038px;top:82px;width:42px;height:353px;background:#fff;box-shadow:0 1px 3px rgba(0,0,0,0.25)"></div>
<div class="abs" style="left:1038px;top:82px;width:42px;height:64px;background:#fff;box-shadow:0 2px 3px rgba(0,0,0,0.08)"></div>
<div class="abs" style="left:1024px;top:83px;width:14px;height:22px;background:#f3f3f3;box-shadow:-1px 1px 3px rgba(0,0,0,0.3)"></div>
<svg class="abs" style="left:1027.3px;top:88.6px" width="8" height="8" viewBox="0 0 8 8"><path d="M0.8 0.8 L4 4 L0.8 7.2 M4 0.8 L7.2 4 L4 7.2" fill="none" stroke="#bbb" stroke-width="0.7"/></svg>
<div class="t" style="left:1042.9px;top:96.7px;font-size:7.9px;color:#222;-webkit-text-stroke:0.3px #222">期间选择</div>
<div class="abs" style="left:1041px;top:108px;width:39px;height:33px;background:#f6f6f6;border-radius:2px"></div>
<div class="t" style="left:1043.3px;top:113.5px;font-size:8.75px;color:#222;"><span class="l la">2020.10</span></div>
<div class="abs" style="left:1059.5px;top:121px;width:0.7px;height:5px;background:#bbb"></div>
<div class="t" style="left:1043.3px;top:133.8px;font-size:8.75px;color:#222;"><span class="l la">2020.10</span></div>
<svg class="abs" style="left:1052.1999999999998px;top:156.1px" width="14.8" height="14.8" viewBox="0 0 13 13"><circle cx="6.5" cy="6.5" r="6.5" fill="#6ac3d9"/><path d="M3.6 6.4 L6.5 3.8 L9.4 6.4 M3.6 9.2 L6.5 6.6 L9.4 9.2" fill="none" stroke="#fff" stroke-width="0.8"/></svg>
<div class="abs" style="left:1041.8px;top:174.7px;width:35.6px;height:18.2px;border-radius:9.1px;background:#6ac3d9"></div>
<div class="mon" style="top:183.4px;color:#fff"><span class="l">10</span>月</div>
<div class="mon" style="top:202.6px;color:#222"><span class="l">11</span>月</div>
<div class="mon" style="top:222.2px;color:#222"><span class="l">12</span>月</div>
<div class="mon" style="top:241.7px;color:#222"><span class="l">1</span>月</div>
<div class="mon" style="top:261.3px;color:#222"><span class="l">2</span>月</div>
<div class="mon" style="top:280.9px;color:#222"><span class="l">3</span>月</div>
<div class="mon" style="top:300.5px;color:#222"><span class="l">4</span>月</div>
<div class="mon" style="top:320.1px;color:#222"><span class="l">5</span>月</div>
<div class="mon" style="top:339.6px;color:#222"><span class="l">6</span>月</div>
<div class="mon" style="top:359.2px;color:#222"><span class="l">7</span>月</div>
<div class="mon" style="top:378.8px;color:#222"><span class="l">8</span>月</div>
<div class="mon" style="top:398.4px;color:#222"><span class="l">9</span>月</div>
<svg class="abs" style="left:1052.1999999999998px;top:411.70000000000005px" width="14.8" height="14.8" viewBox="0 0 13 13"><circle cx="6.5" cy="6.5" r="6.5" fill="#6ac3d9"/><path d="M3.6 3.8 L6.5 6.4 L9.4 3.8 M3.6 6.6 L6.5 9.2 L9.4 6.6" fill="none" stroke="#fff" stroke-width="0.8"/></svg>
<div class="abs" style="left:1027.5px;top:230.6px;width:22px;height:9.2px;border-radius:4.6px;background:#9fcf3f"></div>
<div class="t" style="left:1028.9px;top:236.5px;font-size:8.5px;color:#fff;font-weight:bold;letter-spacing:-0.45px"><span class="l la">2021</span></div>
<div class="abs" style="left:1065px;top:461.5px;width:20px;height:38.5px;background:#fff;border-radius:2px;box-shadow:0 1px 3px rgba(0,0,0,0.16)"></div>
<svg class="abs" style="left:1069px;top:465px" width="11" height="21" viewBox="0 0 11 21"><path d="M8 1.2 L9.4 2.8" stroke="#8fb0f2" stroke-width="1" fill="none"/><path d="M11 2.6 C5.5 2.6 1.6 5.6 1.6 10.6 C1.6 15.4 5.2 18.6 11 18.6 Z" fill="#dbe6fb"/><path d="M11 5.4 C7.4 5.4 4.6 7.4 4.6 10.8 C4.6 14.2 7.4 16.2 11 16.2 Z" fill="#16267f"/><rect x="8.4" y="9" width="2.6" height="3.4" rx="0.8" fill="#59d0f0"/></svg>
<div class="t" style="left:1070.3px;top:492.9px;font-size:7.8px;color:#5960ee;-webkit-text-stroke:0.3px #5960ee">小畅</div>
</div>
</body>
</html>
